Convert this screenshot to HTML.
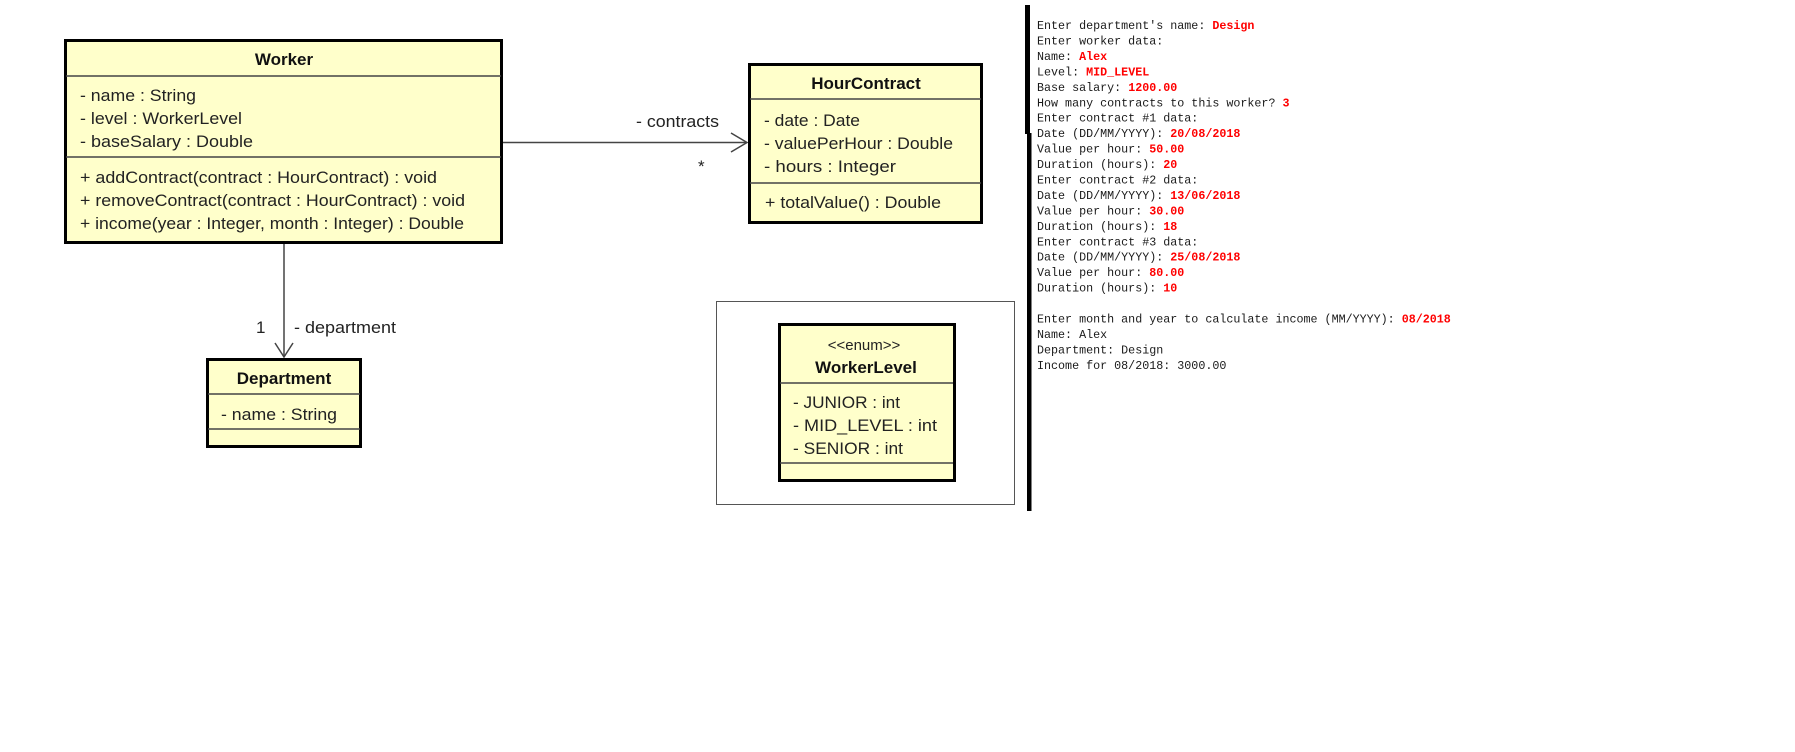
<!DOCTYPE html>
<html><head><meta charset="utf-8"><style>
html,body{margin:0;padding:0;background:#fff;}
svg{display:block}
.t{font-family:"Liberation Sans",Arial,sans-serif;font-size:17px;fill:#222}
.b{font-family:"Liberation Sans",Arial,sans-serif;font-size:17px;font-weight:bold;fill:#111}
.m{font-family:"Liberation Mono",monospace;font-size:11.7px;fill:#1a1a1a}
.r{fill:#f00;font-weight:bold}
</style></head><body>
<svg width="1795" height="752" viewBox="0 0 1795 752" xmlns="http://www.w3.org/2000/svg">
<!-- Worker -->
<rect x="65.5" y="40.5" width="436" height="202" fill="#ffffcb" stroke="#000" stroke-width="3"/>
<line x1="66" y1="76" x2="501" y2="76" stroke="#444" stroke-width="1.5"/>
<line x1="66" y1="157" x2="501" y2="157" stroke="#444" stroke-width="1.5"/>
<text class="b" x="284" y="65" text-anchor="middle">Worker</text>
<text class="t" x="80" y="101" textLength="116" lengthAdjust="spacingAndGlyphs">- name : String</text>
<text class="t" x="80" y="124" textLength="162" lengthAdjust="spacingAndGlyphs">- level : WorkerLevel</text>
<text class="t" x="80" y="147" textLength="173" lengthAdjust="spacingAndGlyphs">- baseSalary : Double</text>
<text class="t" x="80" y="183" textLength="357" lengthAdjust="spacingAndGlyphs">+ addContract(contract : HourContract) : void</text>
<text class="t" x="80" y="206" textLength="385" lengthAdjust="spacingAndGlyphs">+ removeContract(contract : HourContract) : void</text>
<text class="t" x="80" y="229" textLength="384" lengthAdjust="spacingAndGlyphs">+ income(year : Integer, month : Integer) : Double</text>

<!-- association to Department -->
<line x1="284" y1="244" x2="284" y2="357" stroke="#444" stroke-width="1.5"/>
<polyline points="275,343 284,357 293,343" fill="none" stroke="#444" stroke-width="1.5"/>
<text class="t" x="256" y="333">1</text>
<text class="t" x="294" y="333" textLength="102" lengthAdjust="spacingAndGlyphs">- department</text>

<!-- Department -->
<rect x="207.5" y="359.5" width="153" height="87" fill="#ffffcb" stroke="#000" stroke-width="3"/>
<line x1="208" y1="394" x2="360" y2="394" stroke="#444" stroke-width="1.5"/>
<line x1="208" y1="429" x2="360" y2="429" stroke="#444" stroke-width="1.5"/>
<text class="b" x="284" y="384" text-anchor="middle">Department</text>
<text class="t" x="221" y="420" textLength="116" lengthAdjust="spacingAndGlyphs">- name : String</text>

<!-- association to HourContract -->
<line x1="503" y1="142.5" x2="747" y2="142.5" stroke="#444" stroke-width="1.5"/>
<polyline points="731,133 747,142.5 731,152" fill="none" stroke="#444" stroke-width="1.5"/>
<text class="t" x="636" y="127" textLength="83" lengthAdjust="spacingAndGlyphs">- contracts</text>
<text class="t" x="698" y="172">*</text>

<!-- HourContract -->
<rect x="749.5" y="64.5" width="232" height="158" fill="#ffffcb" stroke="#000" stroke-width="3"/>
<line x1="750" y1="99" x2="981" y2="99" stroke="#444" stroke-width="1.5"/>
<line x1="750" y1="183" x2="981" y2="183" stroke="#444" stroke-width="1.5"/>
<text class="b" x="866" y="89" text-anchor="middle">HourContract</text>
<text class="t" x="764" y="126" textLength="96" lengthAdjust="spacingAndGlyphs">- date : Date</text>
<text class="t" x="764" y="149" textLength="189" lengthAdjust="spacingAndGlyphs">- valuePerHour : Double</text>
<text class="t" x="764" y="172" textLength="132" lengthAdjust="spacingAndGlyphs">- hours : Integer</text>
<text class="t" x="765" y="208" textLength="176" lengthAdjust="spacingAndGlyphs">+ totalValue() : Double</text>

<!-- enum frame -->
<rect x="716.5" y="301.5" width="298" height="203" fill="#fff" stroke="#555" stroke-width="1"/>
<rect x="779.5" y="324.5" width="175" height="156" fill="#ffffcb" stroke="#000" stroke-width="3"/>
<line x1="780" y1="383" x2="953" y2="383" stroke="#444" stroke-width="1.5"/>
<line x1="780" y1="463" x2="953" y2="463" stroke="#444" stroke-width="1.5"/>
<text class="t" x="864" y="350" text-anchor="middle" style="font-size:15px">&lt;&lt;enum&gt;&gt;</text>
<text class="b" x="866" y="373" text-anchor="middle">WorkerLevel</text>
<text class="t" x="793" y="408" textLength="107" lengthAdjust="spacingAndGlyphs">- JUNIOR : int</text>
<text class="t" x="793" y="431" textLength="144" lengthAdjust="spacingAndGlyphs">- MID_LEVEL : int</text>
<text class="t" x="793" y="454" textLength="110" lengthAdjust="spacingAndGlyphs">- SENIOR : int</text>

<!-- console -->
<rect x="1025" y="5" width="5" height="129" fill="#000"/>
<rect x="1027" y="133" width="4.5" height="378" fill="#000"/>
<g class="m">
<text x="1037" y="29">Enter department's name: <tspan class="r">Design</tspan></text>
<text x="1037" y="44.5">Enter worker data:</text>
<text x="1037" y="60">Name: <tspan class="r">Alex</tspan></text>
<text x="1037" y="75.4">Level: <tspan class="r">MID_LEVEL</tspan></text>
<text x="1037" y="90.8">Base salary: <tspan class="r">1200.00</tspan></text>
<text x="1037" y="106.3">How many contracts to this worker? <tspan class="r">3</tspan></text>
<text x="1037" y="121.7">Enter contract #1 data:</text>
<text x="1037" y="137.2">Date (DD/MM/YYYY): <tspan class="r">20/08/2018</tspan></text>
<text x="1037" y="152.6">Value per hour: <tspan class="r">50.00</tspan></text>
<text x="1037" y="168">Duration (hours): <tspan class="r">20</tspan></text>
<text x="1037" y="183.5">Enter contract #2 data:</text>
<text x="1037" y="199">Date (DD/MM/YYYY): <tspan class="r">13/06/2018</tspan></text>
<text x="1037" y="214.4">Value per hour: <tspan class="r">30.00</tspan></text>
<text x="1037" y="229.8">Duration (hours): <tspan class="r">18</tspan></text>
<text x="1037" y="245.3">Enter contract #3 data:</text>
<text x="1037" y="260.7">Date (DD/MM/YYYY): <tspan class="r">25/08/2018</tspan></text>
<text x="1037" y="276.2">Value per hour: <tspan class="r">80.00</tspan></text>
<text x="1037" y="291.6">Duration (hours): <tspan class="r">10</tspan></text>
<text x="1037" y="322.5">Enter month and year to calculate income (MM/YYYY): <tspan class="r">08/2018</tspan></text>
<text x="1037" y="338">Name: Alex</text>
<text x="1037" y="353.4">Department: Design</text>
<text x="1037" y="368.8">Income for 08/2018: 3000.00</text>
</g>
</svg>
</body></html>
